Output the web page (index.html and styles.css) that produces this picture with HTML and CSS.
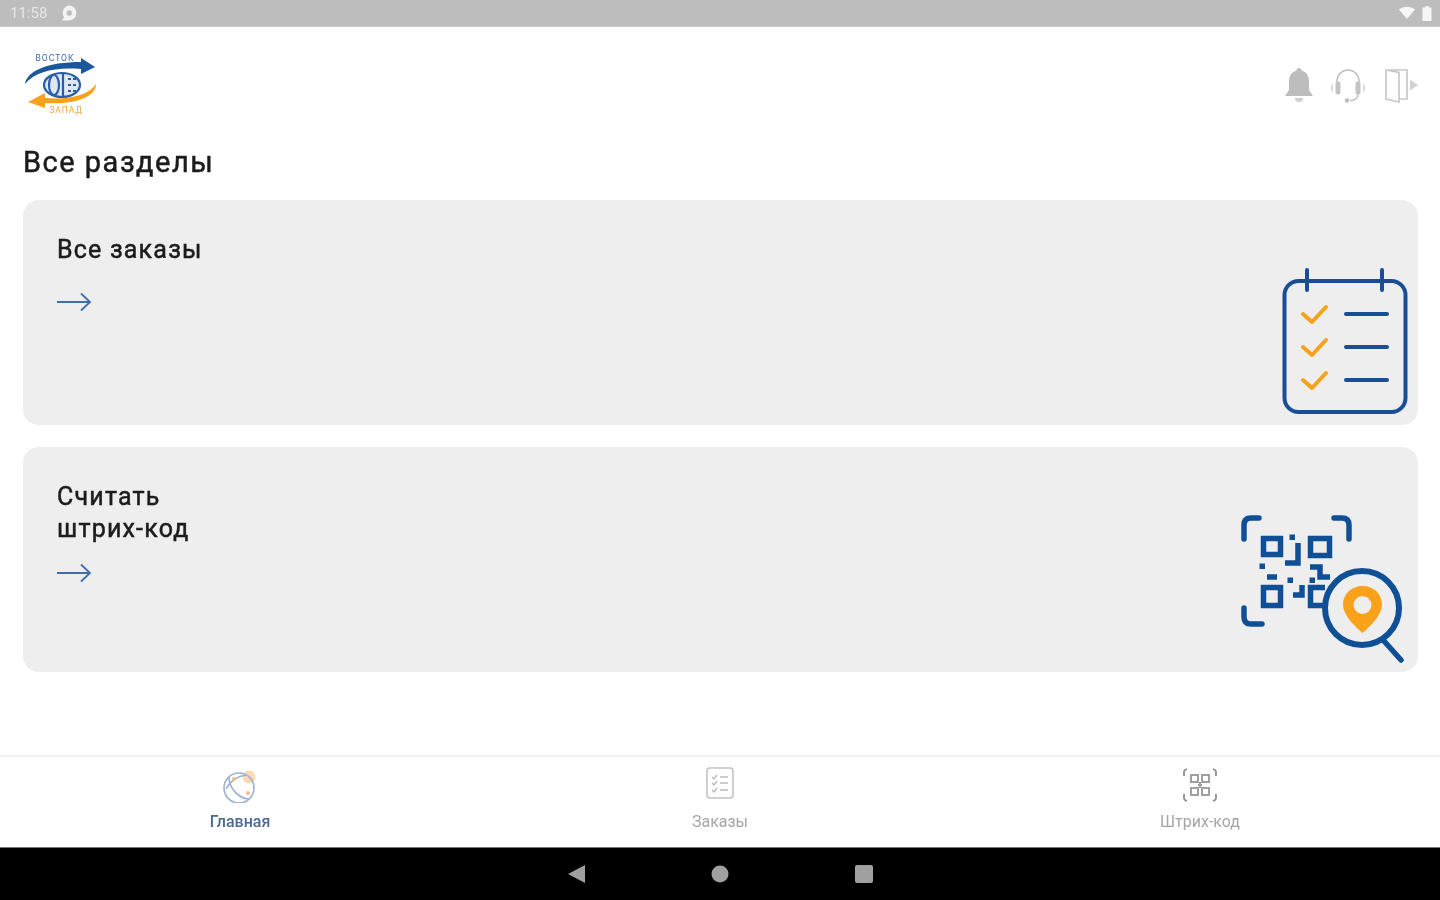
FILE: index.html
```html
<!DOCTYPE html>
<html lang="ru">
<head>
  <meta charset="UTF-8" />
  <title>Все разделы</title>
  <link rel="stylesheet" href="styles.css">
</head>
<body>
  <div class="statusbar">
    <div class="status-left">
      <span class="clock">11:58</span>
      <svg class="status-msg" width="18" height="16" viewBox="2 1 14 13">
        <path d="M9 1.500a6 6 0 0 1 6 6 6 6 0 0 1-6 6H3l2-2.600A6 6 0 0 1 9 1.500z" fill="#f4f4f4"/>
        <circle cx="9.200" cy="7.500" r="2.200" fill="#bdbdbd"/>
      </svg>
    </div>
    <div class="status-right">
      <svg width="18" height="14" viewBox="0 0 18 14"><path d="M1 3.500C5.500-.2 12.500-.2 17 3.500L9 13z" fill="#f6f6f6"/></svg>
      <svg width="10" height="15" viewBox="0 0 10 15"><path d="M3.300 0h3.400v1.500H9.500V15H.5V1.500h2.800z" fill="#f6f6f6"/></svg>
    </div>
  </div>

  <main class="main">
    <header class="topbar">
      <svg class="logo" width="72" height="62" viewBox="0 0 72 62">
        <text x="30" y="8" class="logo-top">ВОСТОК</text>
        <path d="M0 31C2 18 22 9 56 9V5L70 14 56 21V16C32 14 10 18 0 31z" fill="#1c569b"/>
        <ellipse cx="37" cy="32" rx="18" ry="12" fill="#dfe7f3"/>
        <g fill="none" stroke="#2a5ea8" stroke-width="2.200">
          <ellipse cx="37" cy="32" rx="18" ry="12"/>
          <ellipse cx="29" cy="32" rx="5" ry="10"/>
          <path d="M38 20v24"/>
          <path d="M43 26h9M43 32h10M43 38h9" stroke-dasharray="3 2"/>
        </g>
        <path d="M71 31C71 44 50 52 20 50V55L3 49 20 40V45C45 47 64 42 71 31z" fill="#f7a21b"/>
        <text x="41" y="60" class="logo-bottom">ЗАПАД</text>
      </svg>
      <div class="top-actions">
        <svg width="32" height="38" viewBox="0 0 32 38">
          <path d="M16 1c1.500 0 2.500 1 2.500 2.600 5 1.400 7.500 5.400 7.500 11V23l4 6H2l4-6v-8.400c0-5.200 2.500-9.600 7.500-11C13.500 2 14.500 1 16 1z" fill="#bdbdbd"/>
          <path d="M12 31h8a4 4 0 0 1-8 0z" fill="#cfcfcf"/>
        </svg>
        <svg width="36" height="36" viewBox="0 0 36 36">
          <path d="M7 19v-6a11 11 0 0 1 22 0v6" fill="none" stroke="#bdbdbd" stroke-width="1.400"/>
          <rect x="5.500" y="13.500" width="5" height="13" rx="2" fill="#c4c4c4"/>
          <rect x="25.500" y="13.500" width="5" height="13" rx="2" fill="#c4c4c4"/>
          <path d="M2 16.500v7M34 16.500v7" stroke="#dcdcdc" stroke-width="2"/>
          <path d="M28 26c0 5-4 6.500-8 6.500" fill="none" stroke="#bdbdbd" stroke-width="1.400"/>
          <circle cx="17" cy="32.500" r="2.200" fill="#bdbdbd"/>
        </svg>
        <svg class="door" width="33" height="36" viewBox="0 0 33 36">
          <path d="M1 2h21v29h-8M1 2v29l13 3V4.500L1 2z" fill="none" stroke="#c8c8c8" stroke-width="1.700"/>
          <path d="M25 11.500v11l8-5.500z" fill="#d2d2d2"/>
        </svg>
      </div>
    </header>

    <h1 class="page-title">Все разделы</h1>

    <section class="card">
      <div class="card-text">
        <h2>Все заказы</h2>
        <svg class="arrow" width="36" height="22" viewBox="0 0 36 22">
          <path d="M0 11h33M24 2.500l9 8.500-9 8.500" fill="none" stroke="#3f6fa6" stroke-width="1.800"/>
        </svg>
      </div>
      <svg class="card-art art-list" width="126" height="148" viewBox="0 0 126 148">
        <g fill="none" stroke="#1a4e94" stroke-width="4" stroke-linecap="round">
          <rect x="2.500" y="14" width="121" height="131" rx="14"/>
          <path d="M25 3v20M100 3v20"/>
          <path d="M64 47h41M64 80h41M64 113h41"/>
        </g>
        <g fill="none" stroke="#f7a21b" stroke-width="4" stroke-linecap="round" stroke-linejoin="round">
          <path d="M21 47l9 8 14-15"/>
          <path d="M21 80l9 8 14-15"/>
          <path d="M21 113l9 8 14-15"/>
        </g>
      </svg>
    </section>

    <section class="card">
      <div class="card-text">
        <h2>Считать<br>штрих-код</h2>
        <svg class="arrow arrow-low" width="36" height="22" viewBox="0 0 36 22">
          <path d="M0 11h33M24 2.500l9 8.500-9 8.500" fill="none" stroke="#3f6fa6" stroke-width="1.800"/>
        </svg>
      </div>
      <svg class="card-art art-qr" width="168" height="150" viewBox="0 0 168 150">
        <g fill="none" stroke="#0f4f96" stroke-width="5.500" stroke-linecap="round">
          <path d="M3 24V10q0-7 7-7h8M93 3h8q7 0 7 7v14M3 93v9q0 7 7 7h11"/>
        </g>
        <g fill="none" stroke="#0f4f96" stroke-width="5.500">
          <rect x="22.500" y="23.500" width="17" height="16"/>
          <rect x="69.500" y="23.500" width="19" height="17"/>
          <rect x="22.500" y="72.500" width="17" height="18"/>
          <path d="M84 72.500H69.500V90.500H84"/>
          <path d="M57 28V48H44M69 52H79V62H89M26 62H36M61 70V80H52"/>
        </g>
        <g fill="#0f4f96">
          <rect x="18.500" y="48.500" width="5.500" height="5.500"/>
          <rect x="48.500" y="19.500" width="5.500" height="5.500"/>
          <rect x="46.500" y="62.500" width="5.500" height="5.500"/>
          <rect x="68.500" y="62.500" width="5.500" height="5.500"/>
        </g>
        <circle cx="121" cy="93" r="37" fill="#eee" stroke="#0f4f96" stroke-width="6"/>
        <path d="M143 126l17 19" stroke="#0f4f96" stroke-width="5.500" stroke-linecap="round"/>
        <path fill-rule="evenodd" d="M121.500 71c11 0 19.500 8 19.500 18.500 0 9.500-9.500 20-19.500 28.500-10-8.500-19.500-19-19.500-28.500C102 79 110.500 71 121.500 71zm0 10a9 9 0 1 0 0 18 9 9 0 0 0 0-18z" fill="#f9a11b"/>
      </svg>
    </section>
  </main>

  <nav class="tabbar">
    <div class="tab tab-active">
      <svg width="36" height="36" viewBox="0 -2 36 36">
        <circle cx="27" cy="8" r="6.500" fill="#fbd9b5"/>
        <g fill="none" stroke="#9fb2cf" stroke-width="1.600">
          <circle cx="17" cy="19" r="15"/>
          <path d="M7 8c0 10 8 21 20 22M4 20C8 12 16 7 24 6"/>
        </g>
        <circle cx="12" cy="10" r="2" fill="#f3bd8a"/>
        <circle cx="26" cy="24" r="2" fill="#f3bd8a"/>
      </svg>
      <span>Главная</span>
    </div>
    <div class="tab">
      <svg width="30" height="36" viewBox="0 1 30 36">
        <rect x="2" y="2" width="26" height="30" rx="3" fill="none" stroke="#c4c4c4" stroke-width="1.600"/>
        <path d="M15 11h8M15 17h8M15 24h8" stroke="#bcbcbc" stroke-width="1.600"/>
        <path d="M7 11l2 2 3-4M7 17l2 2 3-4M7 24l2 2 3-4" fill="none" stroke="#bcbcbc" stroke-width="1.400"/>
      </svg>
      <span>Заказы</span>
    </div>
    <div class="tab">
      <svg width="36" height="36" viewBox="0 0 36 36">
        <path d="M2 9V5q0-2 3-3M34 9V5q0-2-3-3M2 27v4q0 2 3 3M34 27v4q0 2-3 3" fill="none" stroke="#8f8f8f" stroke-width="1.800"/>
        <g fill="none" stroke="#a0a0a0" stroke-width="2">
          <rect x="9" y="8" width="7" height="7"/>
          <rect x="20" y="8" width="7" height="7"/>
          <rect x="9" y="21" width="7" height="7"/>
          <rect x="20" y="21" width="7" height="7"/>
          <path d="M16 18h4M18 15v6"/>
        </g>
      </svg>
      <span>Штрих-код</span>
    </div>
  </nav>

  <div class="navbar">
    <svg width="18" height="20" viewBox="0 0 18 20"><path d="M18 1v18L1 10z" fill="#a0a0a0"/></svg>
    <svg width="18" height="18" viewBox="0 0 18 18"><circle cx="9" cy="9" r="8.500" fill="#a0a0a0"/></svg>
    <svg width="18" height="20" viewBox="0 0 18 20"><rect y="1" width="18" height="18" rx="2" fill="#a0a0a0"/></svg>
  </div>
</body>
</html>
```

FILE: styles.css
```css
* {
  box-sizing: border-box;
}
body {
  margin: 0;
  height: 900px;
  display: flex;
  flex-direction: column;
  font-family: Roboto, 'Noto Sans', sans-serif;
  background-color: #fff;
  color: #1c1c1c;
  overflow: hidden;
}
.statusbar {
  height: 27px;
  flex: none;
  background-color: #bdbdbd;
  border-bottom: 1px solid #c9c9c9;
  display: flex;
  justify-content: space-between;
  align-items: center;
  padding: 0 8px 0 10px;
}
.status-left,
.status-right {
  display: flex;
  align-items: center;
  filter: blur(0.6px);
}
.status-left {
  gap: 13px;
}
.status-right {
  gap: 6px;
}
.clock {
  font-size: 15px;
  color: #e6e6e6;
}
.main {
  flex: 1;
  padding: 24px 22px 0 23px;
}
.topbar {
  display: flex;
  justify-content: space-between;
  align-items: center;
  height: 68px;
}
.logo {
  align-self: flex-start;
  margin-left: 2px;
  margin-top: 2px;
  filter: blur(0.6px);
}
.logo-top,
.logo-bottom {
  font-size: 8.500px;
  text-anchor: middle;
  letter-spacing: 1px;
}
.logo-top {
  fill: #3c6aa8;
}
.logo-bottom {
  fill: #f2a545;
}
.top-actions {
  display: flex;
  align-items: center;
  gap: 15px;
  margin-top: 2px;
  filter: blur(0.5px);
}
.door {
  margin-left: 4px;
}
.page-title {
  margin: 27px 0 22px;
  font-size: 29px;
  line-height: 32px;
  font-weight: 400;
  letter-spacing: 1.500px;
  -webkit-text-stroke: 0.5px #1c1c1c;
  filter: blur(0.4px);
}
.card {
  height: 225px;
  margin-bottom: 22px;
  background-color: #eeeeee;
  border-radius: 16px;
  display: flex;
  justify-content: space-between;
  padding: 34px 10px 0 34px;
}
.card-text h2 {
  margin: 0;
  font-size: 25px;
  line-height: 32px;
  font-weight: 400;
  letter-spacing: 1.200px;
  -webkit-text-stroke: 0.5px #1c1c1c;
  filter: blur(0.4px);
}
.arrow {
  display: block;
  margin-top: 25px;
}
.arrow-low {
  margin-top: 17px;
}
.card-art {
  align-self: flex-end;
  flex: none;
}
.art-list {
  margin-bottom: 10px;
  filter: blur(0.4px);
}
.art-qr {
  margin-bottom: 7px;
  margin-right: -1px;
  filter: blur(0.4px);
}
.tabbar {
  height: 92px;
  flex: none;
  border-top: 2px solid #f1f1f1;
  display: grid;
  grid-template-columns: repeat(3, 1fr);
}
.tab {
  display: flex;
  flex-direction: column;
  align-items: center;
  padding-top: 10px;
  font-size: 16px;
  color: #a6a6a6;
}
.tab svg {
  margin-bottom: 10px;
  filter: blur(0.6px);
}
.tab span {
  line-height: 18px;
  filter: blur(0.6px);
}
.tab-active {
  color: #4a6a94;
  font-weight: 500;
}
.navbar {
  height: 53px;
  flex: none;
  background-color: #000;
  border-top: 1px solid #777;
  display: flex;
  justify-content: center;
  align-items: center;
  gap: 126px;
}
.navbar svg {
  filter: blur(0.5px);
}
```
